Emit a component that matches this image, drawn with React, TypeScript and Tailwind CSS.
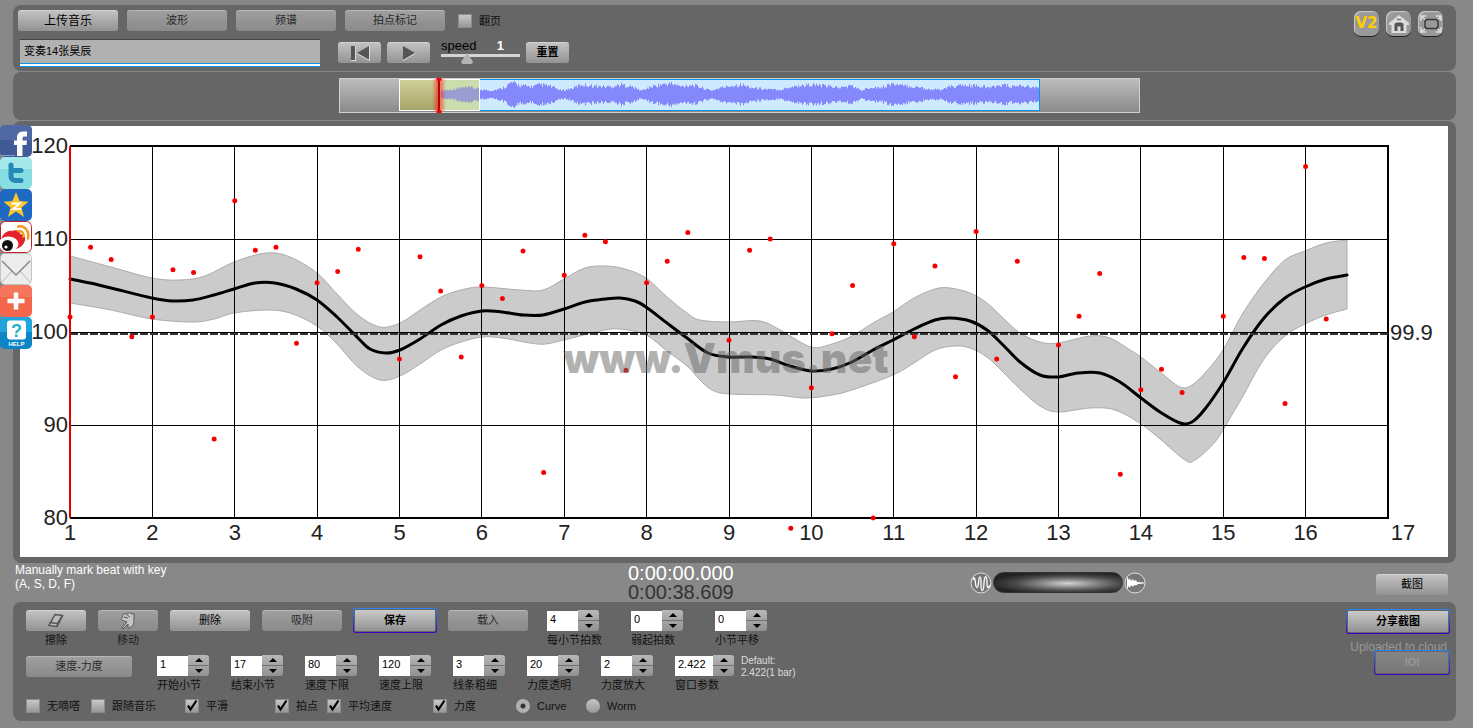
import { useState } from 'react'
import type { ReactNode } from 'react'

const SANS = 'font-["Liberation_Sans","Noto_Sans_CJK_SC",sans-serif]'

const BEATS: (number | null)[] = [
  101.6, 109.1, 107.8, 99.5, 101.6, 106.7, 106.4, 88.5, 114.1, 108.8, 109.1, 98.8, 105.3, 106.5, 108.9, null,
  97.1, 108.1, 104.4, 97.3, 105, 103.6, 108.7, 84.9, 106.1, 110.4, 109.7, 95.9, 105.3, 107.6, 110.7, null,
  99.1, 108.8, 110, 78.9, 94, 99.8, 105, 80, 109.5, 99.5, 107.1, 95.2, 110.8, 97.1, 107.6, null,
  98.6, 101.7, 106.3, 84.7, 93.8, 96, 93.5, null, 101.7, 108, 107.9, 92.3, 117.8, 101.4,
]

type Point = [number, number]

const CURVE: Point[] = [
  [50, 153], [70, 157], [91, 162], [132, 172], [153, 175], [173, 174], [194, 169], [214, 163], [235, 157], [255, 157],
  [276, 163], [297, 174], [317, 191], [338, 212], [350, 223], [366, 227], [380, 224], [400, 213], [421, 199], [441, 190],
  [462, 185], [482, 186], [503, 189], [523, 189], [544, 183], [565, 176], [585, 173], [600, 172], [615, 175], [626, 181],
  [647, 197], [667, 212], [688, 227], [709, 231], [730, 231], [750, 233], [770, 240], [791, 245], [812, 243], [832, 236],
  [853, 224], [873, 214], [894, 203], [915, 194], [930, 192], [950, 195], [967, 204], [983, 219], [1000, 236], [1020, 249],
  [1038, 251], [1058, 247], [1080, 247], [1100, 256], [1121, 272], [1140, 286], [1160, 297], [1172, 296], [1185, 283],
  [1203, 257], [1223, 222], [1244, 192], [1265, 172], [1285, 161], [1306, 153], [1327, 149],
]

const BAND_TOP: Point[] = [
  [50, 130], [91, 141], [132, 152], [160, 154], [185, 150], [214, 136], [246, 127], [270, 131], [297, 147], [317, 168],
  [338, 189], [360, 201], [380, 197], [400, 184], [421, 171], [441, 164], [462, 161], [500, 164], [523, 164], [544, 153],
  [565, 142], [585, 140], [605, 143], [626, 152], [647, 171], [667, 187], [680, 194], [709, 196], [740, 195], [762, 205],
  [791, 221], [812, 218], [832, 210], [853, 197], [873, 186], [894, 172], [915, 163], [930, 162], [950, 167], [967, 177],
  [983, 192], [1000, 207], [1020, 216], [1038, 217], [1070, 210], [1090, 212], [1110, 224], [1121, 231], [1140, 246],
  [1160, 261], [1172, 259], [1185, 247], [1203, 224], [1223, 187], [1244, 157], [1265, 134], [1285, 125], [1306, 117],
  [1327, 114],
]

const BAND_BOTTOM: Point[] = [
  [50, 177], [91, 184], [132, 193], [173, 196], [194, 193], [214, 187], [246, 184], [270, 187], [297, 200], [317, 218],
  [338, 241], [360, 254], [380, 250], [400, 238], [421, 224], [441, 216], [462, 211], [482, 212], [510, 217], [525, 218],
  [544, 214], [580, 205], [600, 203], [626, 209], [647, 225], [667, 240], [680, 254], [692, 264], [709, 268], [755, 269],
  [785, 272], [812, 269], [832, 264], [873, 249], [894, 237], [915, 224], [935, 220], [950, 222], [967, 231], [983, 246],
  [1000, 263], [1020, 280], [1038, 286], [1070, 282], [1095, 284], [1121, 298], [1140, 313], [1165, 334], [1175, 334],
  [1195, 316], [1210, 292], [1223, 270], [1244, 233], [1265, 210], [1285, 198], [1306, 189], [1327, 183],
]

const xOf = (bar: number) => 50 + (bar - 1) * 82.375
const yOf = (tempo: number) => 20 + (120 - tempo) * 9.3

// Catmull-Rom through the points, written as cubic segments
function smooth(points: Point[]) {
  return points
    .slice(1)
    .map((p, i) => {
      const a = points[Math.max(i - 1, 0)]
      const b = points[i]
      const d = points[Math.min(i + 2, points.length - 1)]
      const c1 = [b[0] + (p[0] - a[0]) / 6, b[1] + (p[1] - a[1]) / 6]
      const c2 = [p[0] - (d[0] - b[0]) / 6, p[1] - (d[1] - b[1]) / 6]
      return `C${c1.join(' ')} ${c2.join(' ')} ${p.join(' ')}`
    })
    .join('')
}

const curvePath = `M${CURVE[0].join(' ')}${smooth(CURVE)}`
const bottomReversed = [...BAND_BOTTOM].reverse()
const bandPath = `M${BAND_TOP[0].join(' ')}${smooth(BAND_TOP)}L${bottomReversed[0].join(' ')}${smooth(bottomReversed)}Z`

function TempoChart() {
  return (
    <svg viewBox="0 0 1428 431" className="block w-full bg-white" role="img" aria-label="Tempo curve">
      <path d={bandPath} fill="#cbcbcb" stroke="#ababab" />
      <path d={curvePath} fill="none" stroke="#000" strokeWidth="3" strokeLinecap="round" />
      <g stroke="#000" shapeRendering="crispEdges">
        {Array.from({ length: 15 }, (_, i) => (
          <line key={i} x1={Math.floor(xOf(i + 2)) + 0.5} x2={Math.floor(xOf(i + 2)) + 0.5} y1="20" y2="391" />
        ))}
        {[110, 100, 90].map((v) => (
          <line key={v} x1="50" x2="1368" y1={Math.round(yOf(v)) + 0.5} y2={Math.round(yOf(v)) + 0.5} />
        ))}
        <path d="M50 20H1368V392H50" fill="none" strokeWidth="2" />
        <path d="M50 208H1368" stroke="#333" strokeWidth="2" strokeDasharray="8 2" />
        <path d="M50 20V392" stroke="#e00000" strokeWidth="2" />
      </g>
      {BEATS.map((tempo, i) =>
        tempo === null ? null : (
          <circle key={i} cx={xOf(1 + i / 4)} cy={yOf(tempo)} r="1.7" fill="#c00" stroke="#f00" strokeWidth="1.6" />
        ),
      )}
      <g fill="#222" fontSize="22" fontFamily="Liberation Sans, sans-serif">
        {[120, 110, 100, 90, 80].map((v) => (
          <text key={v} x="48" y={yOf(v) + 7} textAnchor="end">{v}</text>
        ))}
        {Array.from({ length: 16 }, (_, i) => (
          <text key={i} x={xOf(i + 1)} y="414" textAnchor="middle">{i + 1}</text>
        ))}
        <text x="1383" y="414" textAnchor="middle">17</text>
        <text x="1370" y="214">99.9</text>
      </g>
      <text x="706" y="247" textAnchor="middle" fontSize="41" fontWeight="900" fontFamily="Inter, Liberation Sans, sans-serif" fill="#666" fillOpacity="0.5">
        www.Vmus.net
      </text>
    </svg>
  )
}

// loudness envelope of the recording, one value every 10px
const ENVELOPE = [
  4, 5, 7, 7, 5, 4, 6, 12, 9, 8, 10, 8, 4, 6, 10, 9, 8, 8, 10, 8, 4, 8, 10, 11, 8, 10, 7, 4, 7, 9, 10,
  7, 6, 5, 5, 8, 9, 10, 9, 8, 7, 9, 4, 8, 7, 11, 9, 8, 7, 5, 5, 8, 9, 9, 8, 7, 10, 8, 9, 8, 5,
]

const wavePath = Array.from({ length: 598 }, (_, i) => {
  const noise = Math.abs(Math.sin(i * 12.9898) * 43758.5453) % 1
  const from = ENVELOPE[Math.floor(i / 10)]
  const to = ENVELOPE[Math.floor(i / 10) + 1]
  const level = from + ((to - from) * (i % 10)) / 10
  const amp = Math.max(2, level * (0.75 + noise * 0.45))
  return `M${101 + i}.5 ${(15.5 - amp).toFixed(1)}V${(15.5 + amp).toFixed(1)}`
}).join('')

function WaveStrip() {
  return (
    <div className="h-[35px] w-[801px] border border-[#cfcfcf] bg-linear-to-b from-[#bdbdbd] to-[#8a8a8a]">
      <svg viewBox="0 0 799 33" className="block h-full w-full overflow-visible" role="img" aria-label="Waveform">
        <defs>
          <linearGradient id="past" x2="0" y2="1">
            <stop stopColor="#cfcf98" />
            <stop offset="1" stopColor="#a5a468" />
          </linearGradient>
          <linearGradient id="glow">
            <stop stopColor="#f00" stopOpacity="0" />
            <stop offset="0.5" stopColor="#f00" stopOpacity="0.6" />
            <stop offset="1" stopColor="#f00" stopOpacity="0" />
          </linearGradient>
        </defs>
        <rect x="139.500" y="0.500" width="560" height="31" fill="#cdeaff" stroke="#0e95ee" />
        <rect x="60" y="0.500" width="80" height="31" fill="#d8efc0" />
        <rect x="60" y="0.500" width="40" height="31" fill="url(#past)" />
        <path d={wavePath} stroke="#8488fb" />
        <rect x="101" y="1" width="39" height="30" fill="#b8c090" fillOpacity="0.4" />
        <rect x="59.500" y="0.500" width="80" height="31" fill="none" stroke="#fff" />
        <rect x="92" y="0" width="14" height="32" fill="url(#glow)" />
        <path d="M99 0V32" stroke="#c00000" strokeWidth="2" />
        <path d="M96.500 -1h5v2l-2.500 2l-2.500-2zM96.500 34h5v-2l-2.500-2l-2.500 2z" fill="#e00" />
      </svg>
    </div>
  )
}

interface ButtonProps {
  children: ReactNode
  className?: string
  dim?: boolean
  label?: string
}

function FlatButton({ children, className = '', dim, label }: ButtonProps) {
  const tone = dim
    ? 'from-[#a0a0a0] to-[#8a8a8a] text-[#2a2a2a]'
    : 'from-[#c4c4c4] to-[#939393] text-black'
  return (
    <button
      aria-label={label}
      className={`flex h-[21px] shrink-0 items-center justify-center rounded-[3px] bg-linear-to-b shadow-[inset_0_1px_0_#ffffff40] ${tone} ${className}`}
    >
      {children}
    </button>
  )
}

// button with the blue-violet focus frame
function FramedButton({ children, className = '' }: ButtonProps) {
  return (
    <button
      className={`flex h-[25px] shrink-0 items-center justify-center rounded-[3px] border border-transparent p-px text-[11px] font-bold ${className}`}
    >
      {children}
    </button>
  )
}

const FRAME = '[background:linear-gradient(#cacaca,#929292)_content-box,linear-gradient(#666,#666)_padding-box,linear-gradient(#2a86f0,#3c00c8)_border-box]'
const FRAME_DIM = '[background:linear-gradient(#858585,#777)_content-box,linear-gradient(#666,#666)_padding-box,linear-gradient(#2a86f0,#3c00c8)_border-box]'

interface SpinnerProps {
  id: string
  label: string
  value: string
  wide?: boolean
}

function Spinner({ id, label, value, wide }: SpinnerProps) {
  return (
    <div className={wide ? 'w-[59px]' : 'w-[52px]'}>
      <div className="flex h-[21px] items-end">
        <input
          id={id}
          defaultValue={value}
          className="h-5 min-w-0 flex-1 bg-white pb-1 pl-[3px] text-[11px] text-black outline-none"
        />
        <div className="flex h-[21px] w-[21px] flex-col divide-y divide-[#707070] overflow-hidden rounded-r-[3px]">
          <button aria-label={`${label} +`} className="flex flex-1 items-center justify-center bg-linear-to-b from-[#b8b8b8] to-[#a4a4a4]">
            <svg viewBox="0 0 8 4" className="h-1 w-2"><path d="M0 4L4 0L8 4Z" /></svg>
          </button>
          <button aria-label={`${label} -`} className="flex flex-1 items-center justify-center bg-linear-to-b from-[#a4a4a4] to-[#929292]">
            <svg viewBox="0 0 8 4" className="h-1 w-2"><path d="M0 0L4 4L8 0Z" /></svg>
          </button>
        </div>
      </div>
      <label htmlFor={id} className="mt-[3px] block text-[11px] leading-3 whitespace-nowrap text-[#111]">{label}</label>
    </div>
  )
}

interface TickProps {
  label: string
  className?: string
  checked?: boolean
}

function Tick({ label, className = '', checked = false }: TickProps) {
  const [on, setOn] = useState(checked)
  return (
    <label className={`flex items-center gap-[7px] text-[11px] leading-3 whitespace-nowrap text-[#111] ${className}`}>
      <span className="relative block size-[14px]">
        <input
          type="checkbox"
          checked={on}
          onChange={() => setOn(!on)}
          className="block size-[14px] appearance-none border border-[#8c8c8c] bg-linear-to-b from-[#c8c8c8] to-[#989898]"
        />
        {on && (
          <svg viewBox="0 0 14 14" className="pointer-events-none absolute inset-0 size-[14px]">
            <path d="M3 6.500L5.500 10.500L11.500 1.500" fill="none" stroke="#000" strokeWidth="2.200" />
          </svg>
        )}
      </span>
      {label}
    </label>
  )
}

function Choice({ label, className = '', checked }: TickProps) {
  return (
    <label className={`flex items-center gap-[7px] text-[11px] leading-3 text-[#111] ${className}`}>
      <input
        type="radio"
        name="view"
        defaultChecked={checked}
        className="size-[14px] appearance-none rounded-full bg-linear-to-b from-[#c4c4c4] to-[#989898] checked:bg-[radial-gradient(circle,#333_2px,#b0b0b0_3px)]"
      />
      {label}
    </label>
  )
}

function ShareBar() {
  const item = 'block size-8 overflow-hidden rounded-[5px]'
  return (
    <nav aria-label="Share" className="absolute top-[125px] left-0 flex flex-col">
      <a href="#facebook" aria-label="Facebook" className={item}>
        <svg viewBox="0 0 32 32">
          <rect width="32" height="32" fill="#3f5a97" />
          <rect width="32" height="15" fill="#5068a4" />
          <path d="M17 31V20H14V15.500H17V13C17 8.500 19.500 6.500 23 6.500H27V11.500H24.500C23 11.500 22.500 12 22.500 13.500V15.500H27L26.500 20H22.500V31Z" fill="#fff" />
          <path d="M1 30.500H15" stroke="#8a9cc6" />
        </svg>
      </a>
      <a href="#twitter" aria-label="Twitter" className={item}>
        <svg viewBox="0 0 32 32">
          <rect width="32" height="32" fill="#86dde2" />
          <rect width="32" height="12" fill="#a7e9ea" />
          <path d="M11 8V19.500C11 22 13 23.500 15.500 23.500H21M11.500 13.500H21" fill="none" stroke="#2489b5" strokeWidth="5" strokeLinecap="round" />
        </svg>
      </a>
      <a href="#qzone" aria-label="Qzone" className={item}>
        <svg viewBox="0 0 32 32">
          <rect width="32" height="32" fill="#2069c2" />
          <path d="M16 3L19.600 12L28.500 12.800L21.500 18.500L24 28L16 22.500L8 28L10.500 18.500L3.500 12.800L12.400 12Z" fill="#fcc42d" />
          <path d="M11.500 14.500H20L13 20H21" fill="none" stroke="#fff" strokeWidth="1.800" />
        </svg>
      </a>
      <a href="#weibo" aria-label="Weibo" className={item}>
        <svg viewBox="0 0 32 32">
          <rect x="0.500" y="0.500" width="31" height="31" rx="5" fill="#fff" stroke="#c4202a" />
          <path d="M1 19C2 13 8 8.500 12 10C14.500 9 20 8.500 20 13C25 13.500 26.500 17.500 24 22C21 28 10 31 1 28Z" fill="#e3222b" />
          <ellipse cx="8.500" cy="23" rx="10" ry="7.500" fill="#fff" />
          <circle cx="7.500" cy="24.500" r="5.500" fill="#111" />
          <circle cx="6" cy="26" r="1.600" fill="#fff" />
          <path d="M18 10C22 9.500 24 12 23.500 15.500M18 5.500C25 4.500 29.500 10 28 17.500" fill="none" stroke="#f49a1c" strokeWidth="2.500" strokeLinecap="round" />
        </svg>
      </a>
      <a href="#mail" aria-label="Mail" className={item}>
        <svg viewBox="0 0 32 32">
          <rect x="0.500" y="0.500" width="31" height="31" rx="4" fill="#ececec" stroke="#c2c2c2" />
          <path d="M1 30L12 18M31 30L20 18" stroke="#b8b8b8" />
          <path d="M2 8L16 22L30 8" fill="none" stroke="#888" strokeWidth="1.500" />
        </svg>
      </a>
      <a href="#more" aria-label="More" className={item}>
        <svg viewBox="0 0 32 32">
          <rect width="32" height="32" fill="#f4664c" />
          <rect width="32" height="12" fill="#f6765c" />
          <path d="M16 7.500V24.500M7.500 16H24.500" stroke="#fff" strokeWidth="4.500" />
        </svg>
      </a>
      <a href="#help" aria-label="Help" className={item}>
        <svg viewBox="0 0 32 32">
          <rect width="32" height="32" fill="#0d86c8" />
          <rect width="32" height="15" fill="#22a5dc" />
          <rect x="7" y="3.500" width="19" height="19" rx="3" fill="#fff" />
          <text x="16.500" y="19.500" textAnchor="middle" fontSize="18" fontWeight="700" fontFamily="Liberation Sans, sans-serif" fill="#22b4c4">?</text>
          <text x="16.500" y="29" textAnchor="middle" fontSize="6" fontWeight="700" fontFamily="Liberation Sans, sans-serif" fill="#fff">HELP</text>
        </svg>
      </a>
    </nav>
  )
}

function Header() {
  const corner = 'flex size-[25px] items-center justify-center rounded-[7px] bg-[#999] shadow-[inset_1px_1px_1px_#ccc,0_1px_0_#222]'
  return (
    <header className="flex h-[66px] items-start justify-between rounded-lg bg-[#666] pt-[5px] pr-[13px] pl-[5px]">
      <div className="flex flex-col gap-2">
        <div className="flex items-center gap-[9px]">
          <FlatButton className="w-[100px] text-xs">上传音乐</FlatButton>
          <FlatButton dim className="w-[100px] text-[11px]">波形</FlatButton>
          <FlatButton dim className="w-[100px] text-[11px]">频谱</FlatButton>
          <FlatButton dim className="w-[100px] text-[11px]">拍点标记</FlatButton>
          <Tick label="翻页" className="ml-1" />
        </div>
        <div className="flex items-start">
          <input
            aria-label="Title"
            defaultValue="变奏14张昊辰"
            className="ml-0.5 h-7 w-[300px] border-t border-t-[#444] bg-[#b1b1b1] px-1 pb-2 text-[11px] text-black shadow-[inset_0_-1px_0_#0e95ee,inset_0_-3px_0_#fff,inset_0_-4px_0_#0e95ee] outline-none"
          />
          <div className="ml-[18px] flex gap-1.5 pt-[3px]">
            <FlatButton label="Rewind" className="w-[43px]">
              <svg viewBox="0 0 22 16" className="h-4 w-[22px]">
                <path d="M2 1H6V15H2ZM20 1V15L8 8Z" fill="#555" />
                <path d="M6.500 1V15.500H2M20.500 1V15.500L8 8.500" fill="none" stroke="#ddd" />
              </svg>
            </FlatButton>
            <FlatButton label="Play" className="w-[43px]">
              <svg viewBox="0 0 14 16" className="h-4 w-[14px]">
                <path d="M1 1V15L13 8Z" fill="#555" />
                <path d="M1 15.500L13 8.500" stroke="#ddd" />
              </svg>
            </FlatButton>
          </div>
          <div className="ml-[11px] w-[79px]">
            <div className="flex justify-between pr-4 text-[13px] leading-[13px]">
              <label htmlFor="speed" className="text-black">speed</label>
              <output htmlFor="speed" className="font-bold text-white">1</output>
            </div>
            <input
              id="speed"
              type="range"
              defaultValue="30"
              className="mt-0.5 block h-[3px] w-full appearance-none bg-transparent [&::-webkit-slider-runnable-track]:h-[3px] [&::-webkit-slider-runnable-track]:bg-[#d4d4d4] [&::-webkit-slider-thumb]:-mt-px [&::-webkit-slider-thumb]:h-[11px] [&::-webkit-slider-thumb]:w-[12px] [&::-webkit-slider-thumb]:appearance-none [&::-webkit-slider-thumb]:bg-[#b4b4b4] [&::-webkit-slider-thumb]:[clip-path:polygon(50%_0,100%_80%,90%_100%,10%_100%,0_80%)]"
            />
          </div>
          <div className="ml-1.5 pt-[3px]">
            <FlatButton className="w-[43px] text-[11px] font-bold">重置</FlatButton>
          </div>
        </div>
      </div>
      <div className="flex gap-[7px] pt-px">
        <button className={`${corner} font-["DejaVu_Sans",sans-serif] text-[15px] font-bold text-[#ffce00]`}>V2</button>
        <button aria-label="Home" className={corner}>
          <svg viewBox="0 0 22 20" className="h-5 w-[22px]">
            <path d="M11 1L21 9V11H18.500V19H3.500V11H1V9Z" fill="#ddd" />
            <path d="M6.500 17V10.500C6.500 9 8 8.500 11 8.500S15.500 9 15.500 10.500V17H12.500V12.500H9.500V17Z" fill="#555" />
            <path d="M9 5.500H13" stroke="#777" strokeWidth="1.500" />
          </svg>
        </button>
        <button aria-label="Full screen" className={corner}>
          <svg viewBox="0 0 22 20" className="h-5 w-[22px]" fill="none">
            <rect x="5" y="5.500" width="13" height="9" rx="2.500" stroke="#3a3a3a" strokeWidth="1.500" />
            <path d="M1 7V2H6M16 2H21V7M21 13V18H16M6 18H1V13M1 2L5 5.500M21 2L18 5.500M21 18L18 15M1 18L5 15" stroke="#ddd" strokeWidth="1.500" />
          </svg>
        </button>
      </div>
    </header>
  )
}

function StatusBar() {
  return (
    <div className="mr-2 ml-0.5 grid h-[39px] grid-cols-[613fr_342fr_406fr_72px]">
      <p className="text-xs leading-[14px] text-white">
        Manually mark beat with key
        <br />
        (A, S, D, F)
      </p>
      <div className="pt-px text-xl leading-[19px]">
        <div className="text-white">0:00:00.000</div>
        <div className="text-[#333]">0:00:38.609</div>
      </div>
      <div className="flex h-[39px] items-center">
        <svg viewBox="0 0 22 24" className="h-6 w-[22px]" fill="none">
          <circle cx="11" cy="12" r="10" fill="#777" stroke="#ddd" />
          <path d="M3 9C4 5 5 7 5.500 12C6 18 8 18 8.500 12C9 4 11 4 11 12C11 22 13.500 22 14 12C14.500 3 17 4 17 12C17 17 18 18 20 14" stroke="#fff" strokeWidth="1.300" />
        </svg>
        <div className="mx-px h-[21px] w-[130px] rounded-full border border-[#333] bg-[radial-gradient(ellipse_at_58%_55%,#d4d4d4_0,#8c8c8c_25%,#4a4a4a_50%,#222_75%)]" />
        <svg viewBox="0 0 22 24" className="h-6 w-[22px]">
          <circle cx="11" cy="12" r="10" fill="#777" stroke="#ddd" />
          <path d="M3 6L5 9L6 7L7 10L9 8L10 10L12 9L13 11L20 11.500V12.500L14 13L12 14.500L10 14L9 16L7 14L6 17L5 15L3 18Z" fill="#fff" />
        </svg>
      </div>
      <FlatButton className="mt-[11px] w-full text-[11px]">截图</FlatButton>
    </div>
  )
}

function Tools() {
  return (
    <footer className="flex h-[119px] items-start justify-between rounded-lg bg-[#666] pr-1.5 pl-[13px]">
      <div className="pt-2">
        <div className="flex h-[45px] gap-3">
          <div className="text-center text-[11px] leading-3 text-[#111]">
            <FlatButton label="擦除" className="w-[60px]">
              <svg viewBox="0 0 18 16" className="h-4 w-[18px]" fill="none" stroke="#555" strokeWidth="1.500">
                <path d="M8 1.500L15.500 2.500L10 13.500L2 12.500Z" fill="#bbb" />
                <path d="M2.500 9.500L10.500 10.500L15.500 2.500M10.500 10.500L10 13.500" />
              </svg>
            </FlatButton>
            <p className="mt-[3px]">擦除</p>
          </div>
          <div className="text-center text-[11px] leading-3 text-[#222]">
            <FlatButton dim label="移动" className="w-[60px]">
              <svg viewBox="0 0 18 18" className="h-[18px] w-[18px]" fill="#c4c4c4" stroke="#555">
                <path d="M3 16L8 10L5 9C2 9 2 6 4 5C2 3 5 1 7 2C9 0 12 1 12 2L15 1.500V10C15 13 12 16 9 16V12L4 17Z" />
                <path d="M5 5L9 6M7 2L11 5" />
              </svg>
            </FlatButton>
            <p className="mt-[3px]">移动</p>
          </div>
          <FlatButton className="w-20 text-[11px]">删除</FlatButton>
          <FlatButton dim className="w-20 text-[11px]">吸附</FlatButton>
          <div className="-mx-px -mt-0.5">
            <FramedButton className={`w-[84px] ${FRAME}`}>保存</FramedButton>
          </div>
          <FlatButton dim className="w-20 text-[11px]">载入</FlatButton>
          <div className="ml-[7px] flex gap-8">
            <Spinner id="beats" label="每小节拍数" value="4" />
            <Spinner id="pickup" label="弱起拍数" value="0" />
            <Spinner id="shift" label="小节平移" value="0" />
          </div>
        </div>
        <div className="flex h-11">
          <FlatButton dim className="mt-px w-[106px] text-[11px]">速度-力度</FlatButton>
          <div className="ml-[25px] flex gap-[22px]">
            <Spinner id="first-bar" label="开始小节" value="1" />
            <Spinner id="last-bar" label="结束小节" value="17" />
            <Spinner id="tempo-min" label="速度下限" value="80" />
            <Spinner id="tempo-max" label="速度上限" value="120" />
            <Spinner id="line" label="线条粗细" value="3" />
            <Spinner id="alpha" label="力度透明" value="20" />
            <Spinner id="gain" label="力度放大" value="2" />
            <Spinner id="window" label="窗口参数" value="2.422" wide />
          </div>
          <p className="ml-[7px] text-[10px] leading-3 text-[#ddd]">
            Default:
            <br />
            2.422(1 bar)
          </p>
        </div>
        <div className="flex">
          <Tick label="无嘀嗒" className="w-[65px]" />
          <Tick label="跟随音乐" className="w-[94px]" />
          <Tick label="平滑" className="w-[90px]" checked />
          <Tick label="拍点" className="w-[52px]" checked />
          <Tick label="平均速度" className="w-[106px]" checked />
          <Tick label="力度" className="w-[83px]" checked />
          <Choice label="Curve" className="w-[70px]" checked />
          <Choice label="Worm" />
        </div>
      </div>
      <div className="flex flex-col items-end pt-[7px]">
        <FramedButton className={`w-[104px] ${FRAME}`}>分享截图</FramedButton>
        <p className="mt-1.5 mr-[3px] text-xs leading-[14px] text-[#999]">Uploaded to cloud</p>
        <div className="-mt-1">
          <FramedButton className={`w-[76px] text-[#999] ${FRAME_DIM}`}>IOI</FramedButton>
        </div>
      </div>
    </footer>
  )
}

export default function App() {
  return (
    <div className={`relative min-h-screen bg-[#888] pt-[5px] pr-[17px] pb-[7px] pl-[13px] ${SANS}`}>
      <div className="flex flex-col gap-px">
        <Header />
        <section className="flex h-12 items-center justify-center rounded-lg bg-[#666] pb-px pl-[10px]">
          <WaveStrip />
        </section>
        <main className="rounded-lg bg-[#666] pt-[5px] pr-2 pb-1.5 pl-[7px]">
          <TempoChart />
        </main>
      </div>
      <StatusBar />
      <Tools />
      <ShareBar />
    </div>
  )
}
